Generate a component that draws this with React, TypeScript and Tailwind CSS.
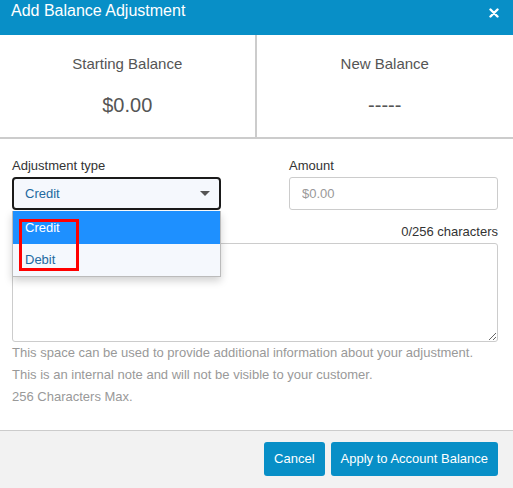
import React from "react";

const font = "font-['Liberation_Sans',Arial,sans-serif]";

function CloseIcon() {
  return (
    <svg width="10" height="10" viewBox="0 0 10 10" className="block">
      <path d="M1.5 1.5 L8.5 8.5 M8.5 1.5 L1.5 8.5" stroke="#fff" strokeWidth="2.4" strokeLinecap="round" />
    </svg>
  );
}

function Caret() {
  return (
    <svg width="10" height="5" viewBox="0 0 10 5" className="block">
      <path d="M0 0 H10 L5 5 Z" fill="#555" />
    </svg>
  );
}

export default function App() {
  return (
    <div className={`${font} w-[513px] h-[488px] bg-white flex flex-col overflow-hidden`}>
      <header className="h-[35px] shrink-0 bg-[#088fc7] flex items-start justify-between pl-[11px] pr-[14px]">
        <h2 className="pt-[2px] text-[16px] leading-[18px] text-white">Add Balance Adjustment</h2>
        <button className="mt-[8px]" aria-label="Close">
          <CloseIcon />
        </button>
      </header>

      <section className="grid grid-cols-2 border-b-2 border-[#ccc] shrink-0">
        <div className="border-r-2 border-[#ccc] flex flex-col items-center pt-[20px] pb-[20px] text-[#555]">
          <p className="text-[15px] leading-[17px]">Starting Balance</p>
          <p className="mt-[22px] text-[20px] leading-[23px]">$0.00</p>
        </div>
        <div className="flex flex-col items-center pt-[20px] pb-[20px] text-[#555]">
          <p className="text-[15px] leading-[17px]">New Balance</p>
          <p className="mt-[22px] text-[20px] leading-[23px]">-----</p>
        </div>
      </section>

      <section className="pl-[12px] pr-[15px] pt-[19px] pb-[22px]">
        <div className="grid grid-cols-2 gap-x-[68px]">
          <div>
            <label className="block text-[13px] leading-[15px] text-[#333] mb-[4px]">Adjustment type</label>
            <div className="relative">
              <div className="h-[33px] rounded-[4px] border-2 border-[#1a1a1a] bg-[#f5f8fd] flex items-center justify-between pl-[11px] pr-[9px]">
                <span className="text-[13px] text-[#2369a0]">Credit</span>
                <Caret />
              </div>
              <ul className="absolute left-0 right-0 top-full mt-[1px] z-10 border border-[#bbb] border-t-0 bg-[#f5f8fd] shadow-[0_4px_8px_rgba(0,0,0,0.18)]">
                <li className="h-[33px] flex items-center pl-[12px] text-[13px] bg-[#1e90ff] text-white">Credit</li>
                <li className="h-[32px] flex items-center pl-[12px] text-[13px] text-[#2369a0]">Debit</li>
                <span className="absolute left-[6px] top-[8px] w-[60px] h-[52px] border-[3px] border-[#ff0000]" />
              </ul>
            </div>
          </div>
          <div>
            <label className="block text-[13px] leading-[15px] text-[#333] mb-[4px]">Amount</label>
            <input
              placeholder="$0.00"
              className={`${font} w-full h-[33px] rounded-[3px] border border-[#ccc] pl-[12px] text-[13px] text-[#333] placeholder:text-[#999] outline-none`}
            />
          </div>
        </div>

        <p className="mt-[14px] mb-[4px] text-right text-[13px] leading-[15px] text-[#333]">0/256 characters</p>
        <textarea
          className={`${font} block w-full h-[99px] rounded-[3px] border border-[#ccc] text-[13px] p-[6px] outline-none`}
        />
        <div className="text-[13px] leading-[22px] text-[#999]">
          <p>This space can be used to provide additional information about your adjustment.</p>
          <p>This is an internal note and will not be visible to your customer.</p>
          <p>256 Characters Max.</p>
        </div>
      </section>

      <footer className="flex-1 border-t border-[#ccc] bg-[#f2f2f2] flex justify-end items-start gap-[6px] pt-[11px] pr-[15px]">
        <button className="h-[34px] px-[10px] rounded-[3px] bg-[#088fc7] text-white text-[13px]">Cancel</button>
        <button className="h-[34px] px-[10px] rounded-[3px] bg-[#088fc7] text-white text-[13px]">Apply to Account Balance</button>
      </footer>
    </div>
  );
}
